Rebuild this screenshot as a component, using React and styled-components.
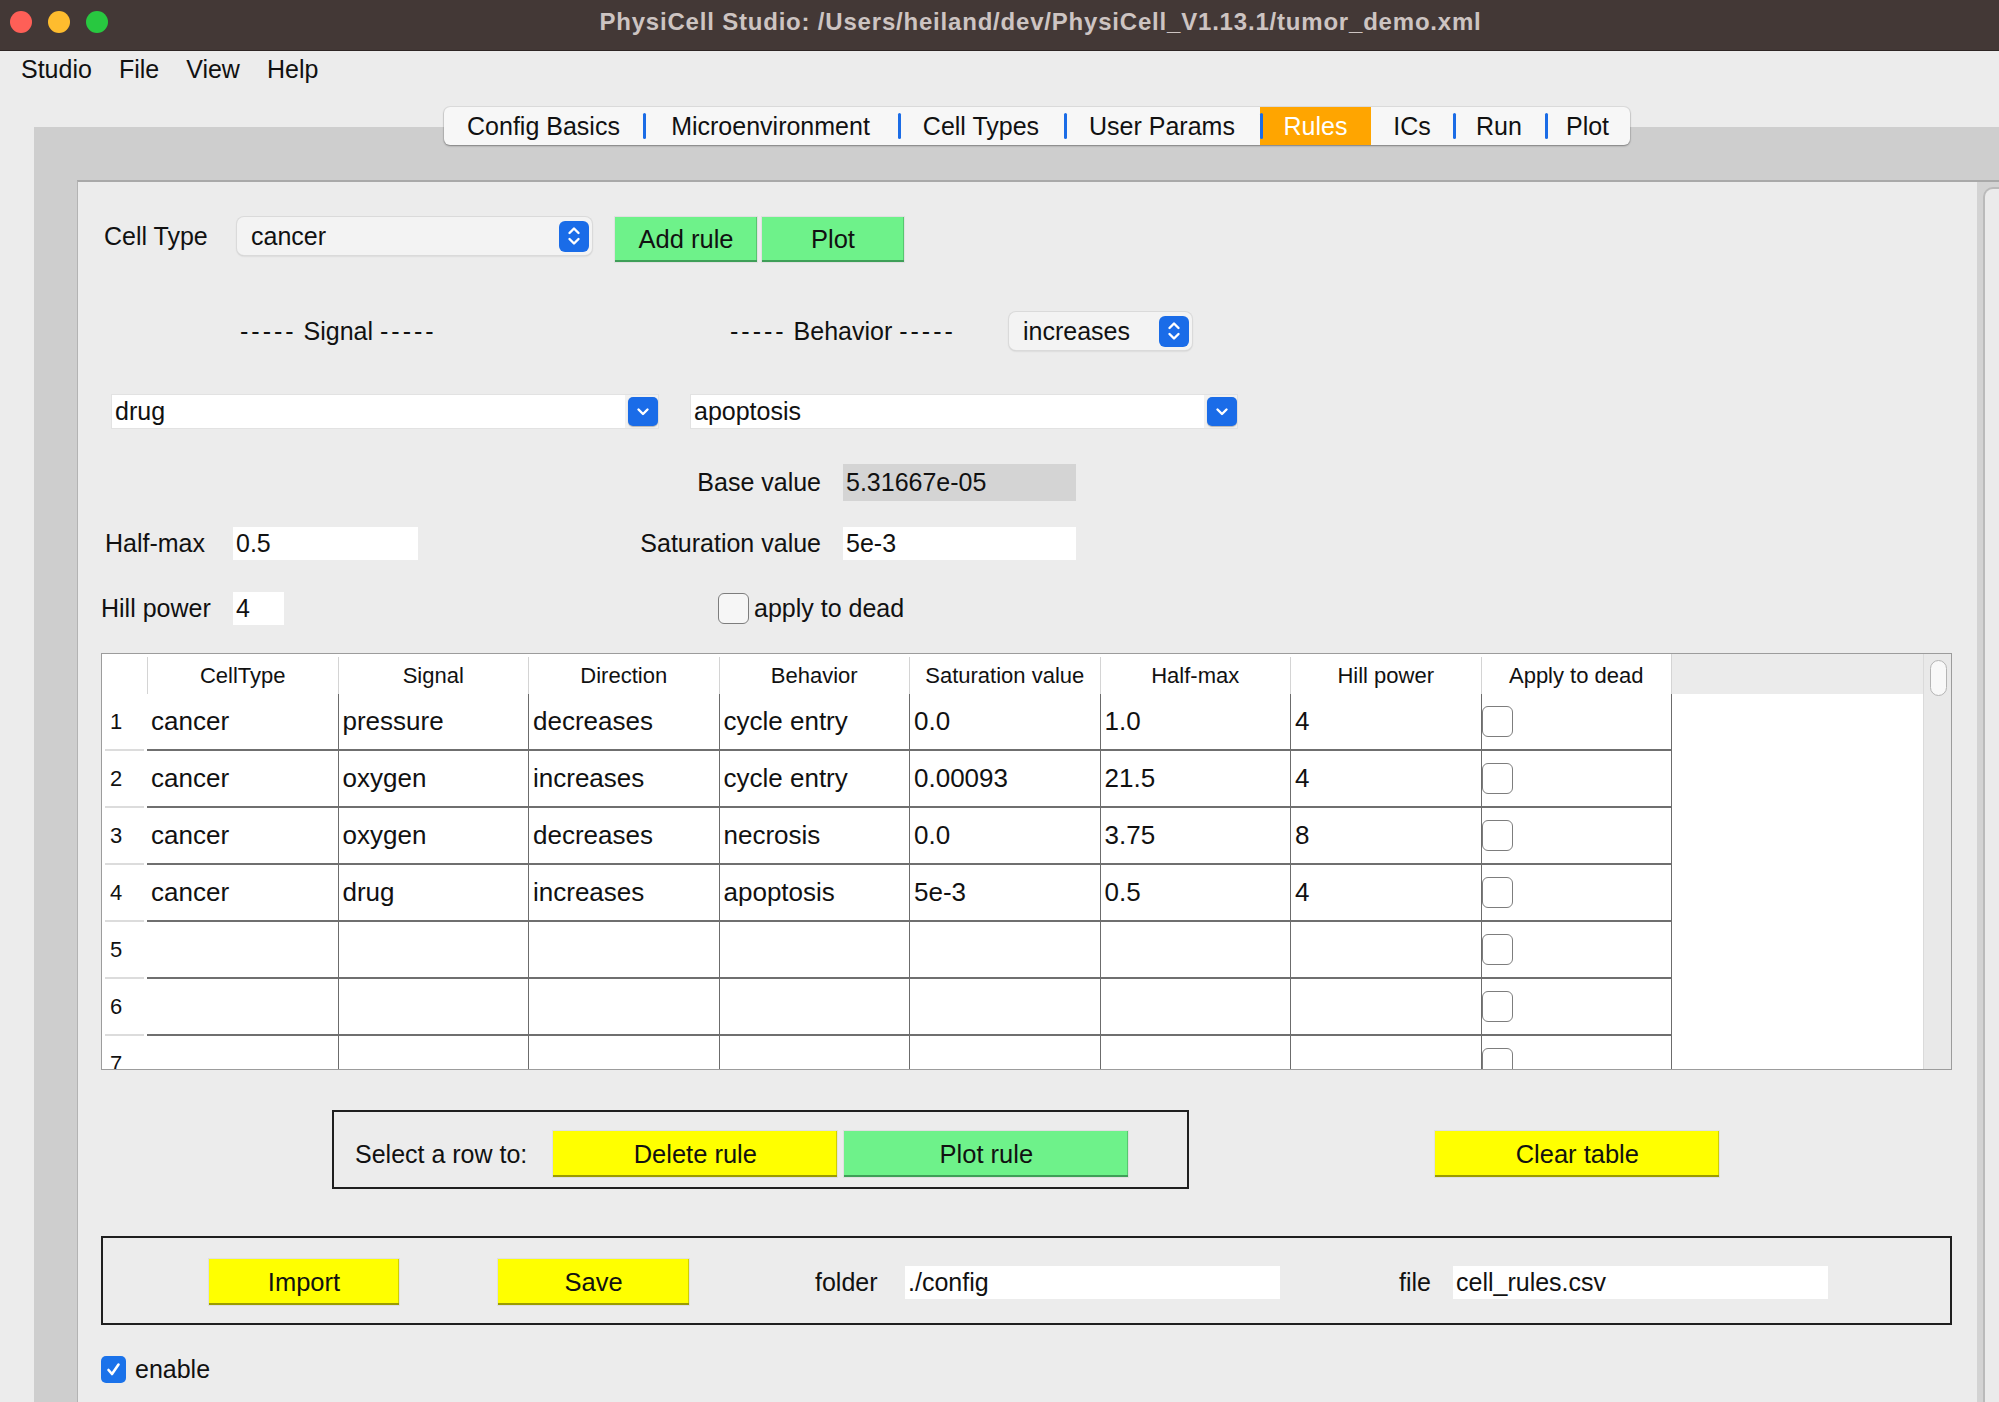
import React from "react";
import styled, { createGlobalStyle } from "styled-components";

const GlobalStyle = createGlobalStyle`
  html, body {
    margin: 0;
    padding: 0;
  }
  body {
    width: 1999px;
    height: 1402px;
    overflow: hidden;
    background: #ececec;
    font-family: "Liberation Sans", Arial, Helvetica, sans-serif;
    color: #111;
  }
`;

const tabs = [
  { name: "Config Basics", w: 199 },
  { name: "Microenvironment", w: 255 },
  { name: "Cell Types", w: 166 },
  { name: "User Params", w: 196 },
  { name: "Rules", w: 111 },
  { name: "ICs", w: 82 },
  { name: "Run", w: 92 },
  { name: "Plot", w: 85 },
];

const columns = [
  "CellType",
  "Signal",
  "Direction",
  "Behavior",
  "Saturation value",
  "Half-max",
  "Hill power",
  "Apply to dead",
];

const rules = [
  ["cancer", "pressure", "decreases", "cycle entry", "0.0", "1.0", "4"],
  ["cancer", "oxygen", "increases", "cycle entry", "0.00093", "21.5", "4"],
  ["cancer", "oxygen", "decreases", "necrosis", "0.0", "3.75", "8"],
  ["cancer", "drug", "increases", "apoptosis", "5e-3", "0.5", "4"],
  ["", "", "", "", "", "", ""],
  ["", "", "", "", "", "", ""],
  ["", "", "", "", "", "", ""],
];

const StepperIcon = () => (
  <svg width="16" height="24" viewBox="0 0 16 24">
    <path d="M3.5 9 L8 4.5 L12.5 9" fill="none" stroke="#fff" strokeWidth="2.4" strokeLinecap="round" strokeLinejoin="round" />
    <path d="M3.5 15 L8 19.5 L12.5 15" fill="none" stroke="#fff" strokeWidth="2.4" strokeLinecap="round" strokeLinejoin="round" />
  </svg>
);

const ChevronDown = () => (
  <svg width="16" height="12" viewBox="0 0 16 12">
    <path d="M3.5 3.5 L8 8 L12.5 3.5" fill="none" stroke="#fff" strokeWidth="2.4" strokeLinecap="round" strokeLinejoin="round" />
  </svg>
);

const CheckMark = () => (
  <svg width="17" height="17" viewBox="0 0 17 17">
    <path d="M3.5 9 L7 13 L13.5 3.5" fill="none" stroke="#fff" strokeWidth="2.6" strokeLinecap="round" strokeLinejoin="round" />
  </svg>
);

const App = () => {
  return (
    <Window>
      <GlobalStyle />
      <TitleBar>
        <Lights>
          <Light $color="#fe5f57" />
          <Light $color="#febc2e" />
          <Light $color="#28c840" />
        </Lights>
        <TitleText>PhysiCell Studio: /Users/heiland/dev/PhysiCell_V1.13.1/tumor_demo.xml</TitleText>
      </TitleBar>

      <MenuBar>
        <MenuItem>Studio</MenuItem>
        <MenuItem>File</MenuItem>
        <MenuItem>View</MenuItem>
        <MenuItem>Help</MenuItem>
      </MenuBar>

      <Workspace>
        <TabRow>
          <Tabs>
            {tabs.map((t, i) => (
              <Tab
                key={t.name}
                $w={t.w}
                $active={t.name === "Rules"}
                $sep={i > 0 && t.name !== "ICs"}
              >
                {t.name}
              </Tab>
            ))}
          </Tabs>
        </TabRow>

        <Pane>
          <ScrollArea>
            <Content>
              <TopRow>
                <Label $w={133}>Cell Type</Label>
                <Combo $w={355}>
                  <ComboText>cancer</ComboText>
                  <Stepper>
                    <StepperIcon />
                  </Stepper>
                </Combo>
                <ButtonPair>
                  <ColorButton $w={142} $h={45} $kind="green">Add rule</ColorButton>
                  <ColorButton $w={142} $h={45} $kind="green">Plot</ColorButton>
                </ButtonPair>
              </TopRow>

              <HeadRow>
                <SectionHead $w={490}>
                  <Dashes>-----</Dashes> Signal <Dashes>-----</Dashes>
                </SectionHead>
                <SectionHead $w={279}>
                  <Dashes>-----</Dashes> Behavior <Dashes>-----</Dashes>
                </SectionHead>
                <Combo $w={183}>
                  <ComboText>increases</ComboText>
                  <Stepper>
                    <StepperIcon />
                  </Stepper>
                </Combo>
              </HeadRow>

              <DropRow>
                <Dropdown>
                  <DropText>drug</DropText>
                  <DropButton>
                    <ChevronDown />
                  </DropButton>
                </Dropdown>
                <Dropdown>
                  <DropText>apoptosis</DropText>
                  <DropButton>
                    <ChevronDown />
                  </DropButton>
                </Dropdown>
              </DropRow>

              <FormRow $top={36} $h={37}>
                <span />
                <span />
                <RightLabel>Base value</RightLabel>
                <Field $w={233} $h={37} $gray>5.31667e-05</Field>
              </FormRow>

              <FormRow $top={26}>
                <FormLabel $shift={3}>Half-max</FormLabel>
                <Field $w={185}>0.5</Field>
                <RightLabel>Saturation value</RightLabel>
                <Field $w={233}>5e-3</Field>
              </FormRow>

              <FormRow $top={32}>
                <FormLabel $shift={-1}>Hill power</FormLabel>
                <Field $w={51}>4</Field>
                <CheckCell>
                  <CheckBox />
                  <span>apply to dead</span>
                </CheckCell>
                <span />
              </FormRow>

              <Table>
                <Grid>
                  <CornerCell />
                  {columns.map((c) => (
                    <HeadCell key={c}>{c}</HeadCell>
                  ))}
                  <HeadFiller />
                  {rules.map((r, i) => (
                    <React.Fragment key={i}>
                      <RowHead>{i + 1}</RowHead>
                      {r.map((v, j) => (
                        <Cell key={j} $first={j === 0}>
                          {v}
                        </Cell>
                      ))}
                      <Cell $tight>
                        <CheckBox $white />
                      </Cell>
                      <BodyFiller />
                    </React.Fragment>
                  ))}
                </Grid>
                <TableScroll>
                  <TableThumb />
                </TableScroll>
              </Table>

              <ActionRow>
                <SelectBox>
                  <BoxLabel>Select a row to:</BoxLabel>
                  <ColorButton $w={284} $h={46} $kind="yellow">Delete rule</ColorButton>
                  <Gap $w={7} />
                  <ColorButton $w={284} $h={46} $kind="green">Plot rule</ColorButton>
                </SelectBox>
                <ClearWrap>
                  <ColorButton $w={284} $h={46} $kind="yellow">Clear table</ColorButton>
                </ClearWrap>
              </ActionRow>

              <FileBox>
                <ColorButton $w={190} $h={46} $kind="yellow">Import</ColorButton>
                <Gap $w={99} />
                <ColorButton $w={191} $h={46} $kind="yellow">Save</ColorButton>
                <Gap $w={126} />
                <Label $w={90}>folder</Label>
                <Field $w={375}>./config</Field>
                <Gap $w={119} />
                <Label $w={54}>file</Label>
                <Field $w={375}>cell_rules.csv</Field>
              </FileBox>

              <EnableRow>
                <BlueCheck>
                  <CheckMark />
                </BlueCheck>
                <span>enable</span>
              </EnableRow>
            </Content>
            <PageScroll>
              <PageThumb />
            </PageScroll>
          </ScrollArea>
        </Pane>
      </Workspace>
    </Window>
  );
};

const Window = styled.div`
  width: 1999px;
  height: 1402px;
  display: flex;
  flex-direction: column;
  overflow: hidden;
`;

const TitleBar = styled.div`
  height: 51px;
  flex-shrink: 0;
  display: flex;
  align-items: center;
  padding: 0 0 6px 10px;
  background: #433836;
  border-bottom: 1px solid #2e2624;
  box-sizing: border-box;
`;

const Lights = styled.div`
  display: flex;
  gap: 16px;
`;

const Light = styled.div`
  width: 22px;
  height: 22px;
  border-radius: 50%;
  background: ${(props) => props.$color};
`;

const TitleText = styled.div`
  flex: 1;
  text-align: center;
  padding-right: 26px;
  color: #cdc4c2;
  font-weight: 700;
  font-size: 24px;
  letter-spacing: 0.8px;
`;

const MenuBar = styled.div`
  height: 36px;
  flex-shrink: 0;
  display: flex;
  align-items: center;
  gap: 27px;
  padding-left: 21px;
  font-size: 25px;
`;

const MenuItem = styled.span``;

const Workspace = styled.div`
  flex: 1;
  display: flex;
  flex-direction: column;
  padding-top: 20px;
  min-height: 0;
`;

const TabRow = styled.div`
  display: flex;
  padding-left: 444px;
  margin-bottom: -18px;
  position: relative;
  z-index: 1;
`;

const Tabs = styled.div`
  display: flex;
  height: 38px;
  background: #f7f7f7;
  border-radius: 6px;
  overflow: hidden;
  box-shadow: 0 1px 2px rgba(0, 0, 0, 0.35), 0 0 0 1px rgba(0, 0, 0, 0.06);
`;

const Tab = styled.div`
  position: relative;
  width: ${(props) => props.$w}px;
  display: flex;
  align-items: center;
  justify-content: center;
  font-size: 25px;
  color: ${(props) => (props.$active ? "#fff" : "#111")};
  background: ${(props) => (props.$active ? "#ffa500" : "transparent")};

  &::before {
    content: "";
    display: ${(props) => (props.$sep ? "block" : "none")};
    position: absolute;
    left: 0;
    top: 6px;
    bottom: 6px;
    width: 3px;
    border-radius: 2px;
    background: #1b6ce6;
  }
`;

const Pane = styled.div`
  flex: 1;
  display: flex;
  margin-left: 34px;
  padding: 53px 0 0 43px;
  background: #cecece;
  min-height: 0;
`;

const ScrollArea = styled.div`
  flex: 1;
  display: flex;
  background: #ececec;
  border-top: 2px solid #a9a9a9;
  border-left: 1px solid #b3b3b3;
`;

const Content = styled.div`
  flex: 1;
  padding: 35px 25px 0 23px;
  font-size: 25px;
`;

const TopRow = styled.div`
  display: flex;
  align-items: flex-start;
  padding-left: 3px;
`;

const Label = styled.div`
  width: ${(props) => (props.$w ? `${props.$w}px` : "auto")};
  flex-shrink: 0;
  height: 38px;
  line-height: 38px;
  white-space: nowrap;
`;

const FormLabel = styled.div`
  padding-left: ${(props) => props.$shift + 1}px;
  white-space: nowrap;
`;

const RightLabel = styled.div`
  text-align: right;
  padding-right: 22px;
  white-space: nowrap;
`;

const Combo = styled.div`
  width: ${(props) => props.$w}px;
  height: 38px;
  box-sizing: border-box;
  display: flex;
  align-items: center;
  justify-content: space-between;
  padding: 0 3px 0 14px;
  background: #f3f3f3;
  border-radius: 7px;
  box-shadow: 0 0 0 1px #dadada, 0 1px 2px rgba(0, 0, 0, 0.22);
`;

const ComboText = styled.span``;

const Stepper = styled.div`
  width: 30px;
  height: 31px;
  border-radius: 6px;
  background: #1a6ce8;
  display: flex;
  align-items: center;
  justify-content: center;
`;

const ButtonPair = styled.div`
  display: flex;
  gap: 5px;
  margin-left: 23px;
`;

const palette = {
  green: { bg: "#6ef28a", edge: "#3f9f58", side: "#57c770" },
  yellow: { bg: "#ffff00", edge: "#9c9c00", side: "#d0d000" },
};

const ColorButton = styled.div`
  width: ${(props) => props.$w}px;
  height: ${(props) => props.$h}px;
  flex-shrink: 0;
  box-sizing: border-box;
  display: flex;
  align-items: center;
  justify-content: center;
  font-size: 25.5px;
  background: ${(props) => palette[props.$kind].bg};
  box-shadow: inset 0 -2px 0 ${(props) => palette[props.$kind].edge},
    inset -1px 0 0 ${(props) => palette[props.$kind].side},
    0 0 0 1px rgba(0, 0, 0, 0.05);
`;

const HeadRow = styled.div`
  display: flex;
  align-items: center;
  height: 38px;
  margin-top: 50px;
  padding-left: 139px;
`;

const SectionHead = styled.div`
  width: ${(props) => props.$w}px;
  flex-shrink: 0;
  white-space: nowrap;
`;

const Dashes = styled.span`
  letter-spacing: 3px;
`;

const DropRow = styled.div`
  display: flex;
  gap: 33px;
  margin-top: 45px;
  padding-left: 11px;
`;

const Dropdown = styled.div`
  width: 546px;
  height: 33px;
  display: flex;
  align-items: center;
  gap: 3px;
  background: #f1f1f1;
  box-shadow: 0 0 0 1px #e2e2e2;
`;

const DropText = styled.div`
  flex: 1;
  height: 100%;
  display: flex;
  align-items: center;
  padding-left: 3px;
  background: #fff;
`;

const DropButton = styled.div`
  width: 30px;
  height: 29px;
  border-radius: 5px;
  background: #1a6ce8;
  display: flex;
  align-items: center;
  justify-content: center;
  box-shadow: 0 1px 1px rgba(0, 0, 0, 0.25);
`;

const FormRow = styled.div`
  display: grid;
  grid-template-columns: 132px 377px 233px 234px;
  height: ${(props) => props.$h || 33}px;
  align-items: center;
  margin-top: ${(props) => props.$top}px;
`;

const Field = styled.div`
  width: ${(props) => props.$w}px;
  height: ${(props) => props.$h || 33}px;
  box-sizing: border-box;
  display: flex;
  align-items: center;
  padding-left: 3px;
  flex-shrink: 0;
  background: ${(props) => (props.$gray ? "#d4d4d4" : "#fff")};
`;

const CheckCell = styled.div`
  display: flex;
  align-items: center;
  gap: 5px;
  padding-left: 108px;
  white-space: nowrap;
`;

const CheckBox = styled.div`
  width: 31px;
  height: 31px;
  box-sizing: border-box;
  border: 1.5px solid #7d7d7d;
  border-radius: 6px;
  background: ${(props) => (props.$white ? "#fff" : "#f6f6f6")};
  flex-shrink: 0;
`;

const Table = styled.div`
  display: flex;
  height: 417px;
  box-sizing: border-box;
  margin-top: 28px;
  border: 1px solid #9c9c9c;
  background: #fff;
  overflow: hidden;
`;

const Grid = styled.div`
  flex: 1;
  display: grid;
  grid-template-columns: 45px repeat(8, 190.5px) 1fr;
  grid-template-rows: 40px;
  grid-auto-rows: 57px;
  overflow: hidden;
`;

const CornerCell = styled.div`
  background: #fff;
`;

const HeadCell = styled.div`
  display: flex;
  align-items: center;
  justify-content: center;
  font-size: 22px;
  background: #fff;
  border-left: 1px solid #d4d4d4;
  margin-top: 3px;
`;

const HeadFiller = styled.div`
  background: #ebebeb;
  border-left: 1px solid #d4d4d4;
`;

const RowHead = styled.div`
  display: flex;
  align-items: center;
  padding-left: 5px;
  font-size: 22px;
  background: #fff;
  border-bottom: 2px solid #dcdcdc;
  margin: 0 3px;
`;

const Cell = styled.div`
  display: flex;
  align-items: center;
  padding-left: ${(props) => (props.$tight ? 0 : 4)}px;
  font-size: 26px;
  background: #fff;
  border-left: ${(props) => (props.$first ? "none" : "1px solid #6c6c6c")};
  border-bottom: 2px solid #6f6f6f;
  white-space: nowrap;
  overflow: hidden;
`;

const BodyFiller = styled.div`
  background: #fff;
  border-left: 1px solid #6c6c6c;
`;

const TableScroll = styled.div`
  width: 28px;
  flex-shrink: 0;
  background: #e9e9e9;
  border-left: 1px solid #dadada;
  padding: 6px 0 0 6px;
  box-sizing: border-box;
`;

const TableThumb = styled.div`
  width: 17px;
  height: 36px;
  box-sizing: border-box;
  border: 1.5px solid #b4b4b4;
  border-radius: 9px;
  background: #f8f8f8;
`;

const ActionRow = styled.div`
  display: flex;
  align-items: flex-start;
  margin-top: 40px;
  padding-left: 231px;
`;

const SelectBox = styled.div`
  display: flex;
  align-items: center;
  padding: 19px 59px 10px 21px;
  border: 2px solid #1f1f1f;
`;

const BoxLabel = styled.div`
  margin-right: 26px;
  white-space: nowrap;
`;

const ClearWrap = styled.div`
  margin: 21px 0 0 246px;
`;

const FileBox = styled.div`
  display: flex;
  align-items: center;
  height: 89px;
  box-sizing: border-box;
  margin-top: 47px;
  padding: 3px 0 0 106px;
  border: 2px solid #1f1f1f;
`;

const Gap = styled.div`
  width: ${(props) => props.$w}px;
  flex-shrink: 0;
`;

const EnableRow = styled.div`
  display: flex;
  align-items: center;
  gap: 9px;
  margin-top: 30px;
`;

const BlueCheck = styled.div`
  width: 25px;
  height: 27px;
  border-radius: 5px;
  background: #1a72ea;
  display: flex;
  align-items: center;
  justify-content: center;
`;

const PageScroll = styled.div`
  width: 22px;
  flex-shrink: 0;
  background: #d3d3d3;
  padding: 5px 0 0 6px;
  box-sizing: border-box;
`;

const PageThumb = styled.div`
  height: 1300px;
  box-sizing: border-box;
  border: 2px solid #bababa;
  border-right: none;
  border-radius: 10px 0 0 10px;
  background: #ebebeb;
`;

export default App;
